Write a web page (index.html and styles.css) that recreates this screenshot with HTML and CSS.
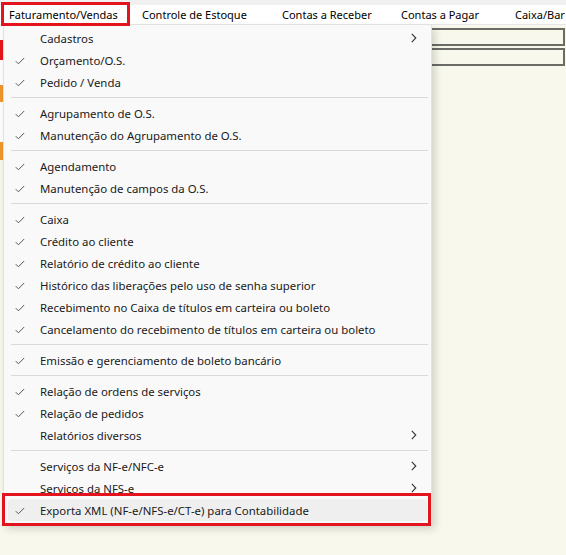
FILE: index.html
```
<!DOCTYPE html>
<html lang="pt-BR">
<head>
<meta charset="utf-8">
<link rel="stylesheet" href="styles.css">
</head>
<body>
<div class="page">
  <div class="topgap"></div>
  <div class="menubar">
    <span class="mb-item mb-fat">Faturamento/Vendas</span>
    <span class="mb-item mb-est">Controle de Estoque</span>
    <span class="mb-item mb-rec">Contas a Receber</span>
    <span class="mb-item mb-pag">Contas a Pagar</span>
    <span class="mb-item mb-cx">Caixa/Bar</span>
  </div>
  <div class="content">
    <div class="strip">
      <div class="strip-white"></div>
      <div class="strip-red"></div>
      <div class="strip-gap1"></div>
      <div class="strip-orange"></div>
      <div class="strip-gap2"></div>
      <div class="strip-orange2"></div>
    </div>
    <div class="fields">
      <div class="field"></div>
      <div class="field"></div>
    </div>
  </div>

  <div class="menu">
    <div class="item"><span class="check"></span><span class="label">Cadastros</span><span class="arrow"><svg width="6" height="10" viewBox="0 0 6 10"><polyline points="0.8,0.8 4.8,5 0.8,9.2" fill="none" stroke="#333" stroke-width="1.1"/></svg></span></div>
    <div class="item"><span class="check"><svg width="10" height="8" viewBox="0 0 10 8"><polyline points="0.8,4.2 3.4,6.8 9.2,1" fill="none" stroke="#555" stroke-width="1"/></svg></span><span class="label">Orçamento/O.S.</span></div>
    <div class="item"><span class="check"><svg width="10" height="8" viewBox="0 0 10 8"><polyline points="0.8,4.2 3.4,6.8 9.2,1" fill="none" stroke="#555" stroke-width="1"/></svg></span><span class="label">Pedido / Venda</span></div>
    <div class="sep"></div>
    <div class="item"><span class="check"><svg width="10" height="8" viewBox="0 0 10 8"><polyline points="0.8,4.2 3.4,6.8 9.2,1" fill="none" stroke="#555" stroke-width="1"/></svg></span><span class="label">Agrupamento de O.S.</span></div>
    <div class="item"><span class="check"><svg width="10" height="8" viewBox="0 0 10 8"><polyline points="0.8,4.2 3.4,6.8 9.2,1" fill="none" stroke="#555" stroke-width="1"/></svg></span><span class="label">Manutenção do Agrupamento de O.S.</span></div>
    <div class="sep"></div>
    <div class="item"><span class="check"><svg width="10" height="8" viewBox="0 0 10 8"><polyline points="0.8,4.2 3.4,6.8 9.2,1" fill="none" stroke="#555" stroke-width="1"/></svg></span><span class="label">Agendamento</span></div>
    <div class="item"><span class="check"><svg width="10" height="8" viewBox="0 0 10 8"><polyline points="0.8,4.2 3.4,6.8 9.2,1" fill="none" stroke="#555" stroke-width="1"/></svg></span><span class="label">Manutenção de campos da O.S.</span></div>
    <div class="sep"></div>
    <div class="item"><span class="check"><svg width="10" height="8" viewBox="0 0 10 8"><polyline points="0.8,4.2 3.4,6.8 9.2,1" fill="none" stroke="#555" stroke-width="1"/></svg></span><span class="label">Caixa</span></div>
    <div class="item"><span class="check"><svg width="10" height="8" viewBox="0 0 10 8"><polyline points="0.8,4.2 3.4,6.8 9.2,1" fill="none" stroke="#555" stroke-width="1"/></svg></span><span class="label">Crédito ao cliente</span></div>
    <div class="item"><span class="check"><svg width="10" height="8" viewBox="0 0 10 8"><polyline points="0.8,4.2 3.4,6.8 9.2,1" fill="none" stroke="#555" stroke-width="1"/></svg></span><span class="label">Relatório de crédito ao cliente</span></div>
    <div class="item"><span class="check"><svg width="10" height="8" viewBox="0 0 10 8"><polyline points="0.8,4.2 3.4,6.8 9.2,1" fill="none" stroke="#555" stroke-width="1"/></svg></span><span class="label">Histórico das liberações pelo uso de senha superior</span></div>
    <div class="item"><span class="check"><svg width="10" height="8" viewBox="0 0 10 8"><polyline points="0.8,4.2 3.4,6.8 9.2,1" fill="none" stroke="#555" stroke-width="1"/></svg></span><span class="label">Recebimento no Caixa de títulos em carteira ou boleto</span></div>
    <div class="item"><span class="check"><svg width="10" height="8" viewBox="0 0 10 8"><polyline points="0.8,4.2 3.4,6.8 9.2,1" fill="none" stroke="#555" stroke-width="1"/></svg></span><span class="label">Cancelamento do recebimento de títulos em carteira ou boleto</span></div>
    <div class="sep"></div>
    <div class="item"><span class="check"><svg width="10" height="8" viewBox="0 0 10 8"><polyline points="0.8,4.2 3.4,6.8 9.2,1" fill="none" stroke="#555" stroke-width="1"/></svg></span><span class="label">Emissão e gerenciamento de boleto bancário</span></div>
    <div class="sep"></div>
    <div class="item"><span class="check"><svg width="10" height="8" viewBox="0 0 10 8"><polyline points="0.8,4.2 3.4,6.8 9.2,1" fill="none" stroke="#555" stroke-width="1"/></svg></span><span class="label">Relação de ordens de serviços</span></div>
    <div class="item"><span class="check"><svg width="10" height="8" viewBox="0 0 10 8"><polyline points="0.8,4.2 3.4,6.8 9.2,1" fill="none" stroke="#555" stroke-width="1"/></svg></span><span class="label">Relação de pedidos</span></div>
    <div class="item"><span class="check"></span><span class="label">Relatórios diversos</span><span class="arrow"><svg width="6" height="10" viewBox="0 0 6 10"><polyline points="0.8,0.8 4.8,5 0.8,9.2" fill="none" stroke="#333" stroke-width="1.1"/></svg></span></div>
    <div class="sep"></div>
    <div class="item"><span class="check"></span><span class="label">Serviços da NF-e/NFC-e</span><span class="arrow"><svg width="6" height="10" viewBox="0 0 6 10"><polyline points="0.8,0.8 4.8,5 0.8,9.2" fill="none" stroke="#333" stroke-width="1.1"/></svg></span></div>
    <div class="item"><span class="check"></span><span class="label">Serviços da NFS-e</span><span class="arrow"><svg width="6" height="10" viewBox="0 0 6 10"><polyline points="0.8,0.8 4.8,5 0.8,9.2" fill="none" stroke="#333" stroke-width="1.1"/></svg></span></div>
    <div class="item hover"><span class="check"><svg width="10" height="8" viewBox="0 0 10 8"><polyline points="0.8,4.2 3.4,6.8 9.2,1" fill="none" stroke="#555" stroke-width="1"/></svg></span><span class="label">Exporta XML (NF-e/NFS-e/CT-e) para Contabilidade</span></div>
  </div>

  <div class="redbox redbox-top"></div>
  <div class="redbox redbox-bottom"></div>
</div>
</body>
</html>
```
FILE: styles.css
```
* { box-sizing: border-box; }
html, body { margin: 0; padding: 0; }
body {
  width: 566px;
  height: 555px;
  overflow: hidden;
  background: #f8f9ec;
  font-family: "Noto Sans", "Open Sans", sans-serif;
  color: #1a1a1a;
}
.page {
  position: relative;
  width: 566px;
  height: 555px;
}
.topgap {
  height: 5px;
  background: #f0f0f0;
}
.menubar {
  height: 20px;
  background: #ffffff;
  display: flex;
  align-items: center;
  font-size: 11px;
  color: #000;
  white-space: nowrap;
  border-bottom: 1px solid #e6e6e6;
  overflow: hidden;
}
.mb-item { display: block; flex: none; }
.mb-fat { margin-left: 9px; width: 133px; }
.mb-est { width: 140px; }
.mb-rec { width: 119px; }
.mb-pag { width: 114px; }
.mb-cx { width: 60px; }

.content {
  display: flex;
  height: 530px;
}
.strip {
  width: 3px;
  display: flex;
  flex-direction: column;
}
.strip-white { height: 15px; background: #ffffff; }
.strip-red { height: 20px; background: #e8141d; }
.strip-gap1 { height: 25px; background: #ffffff; }
.strip-orange { height: 17px; background: #f0962c; }
.strip-gap2 { height: 40px; background: #ffffff; }
.strip-orange2 { height: 18px; background: #f0962c; }

.fields {
  margin-left: 397px;
  padding-top: 3px;
  display: flex;
  flex-direction: column;
  gap: 2px;
}
.field {
  width: 165px;
  height: 18px;
  border: 2px solid #6b6c66;
  background: #f8f9ec;
}

.menu {
  position: absolute;
  left: 3px;
  top: 25px;
  width: 429px;
  padding: 2px 0 3px;
  background: #f9f9f9;
  border: 1px solid #e2e2e2;
  border-top: none;
  box-shadow: 3px 4px 8px rgba(0, 0, 0, 0.16);
  font-size: 11.4px;
  color: #1a1a1a;
}
.item {
  height: 22px;
  margin: 0 4px;
  display: flex;
  align-items: center;
  border-radius: 4px;
  white-space: nowrap;
}
.item.hover { background: #efefef; }
.check {
  width: 32px;
  flex: none;
  display: flex;
  align-items: center;
  padding-left: 7px;
  padding-top: 2px;
}
.label { flex: 1; }
.arrow {
  flex: none;
  width: 6px;
  margin-right: 10px;
  display: flex;
  align-items: center;
}
.sep {
  height: 1px;
  margin: 4px 3px 4px 7px;
  background: #d9d9d9;
}

.redbox {
  position: absolute;
  border: 3px solid #e3141e;
}
.redbox-top {
  left: 1px;
  top: 2px;
  width: 129px;
  height: 24px;
}
.redbox-bottom {
  left: 2px;
  top: 493px;
  width: 429px;
  height: 33px;
}
```
